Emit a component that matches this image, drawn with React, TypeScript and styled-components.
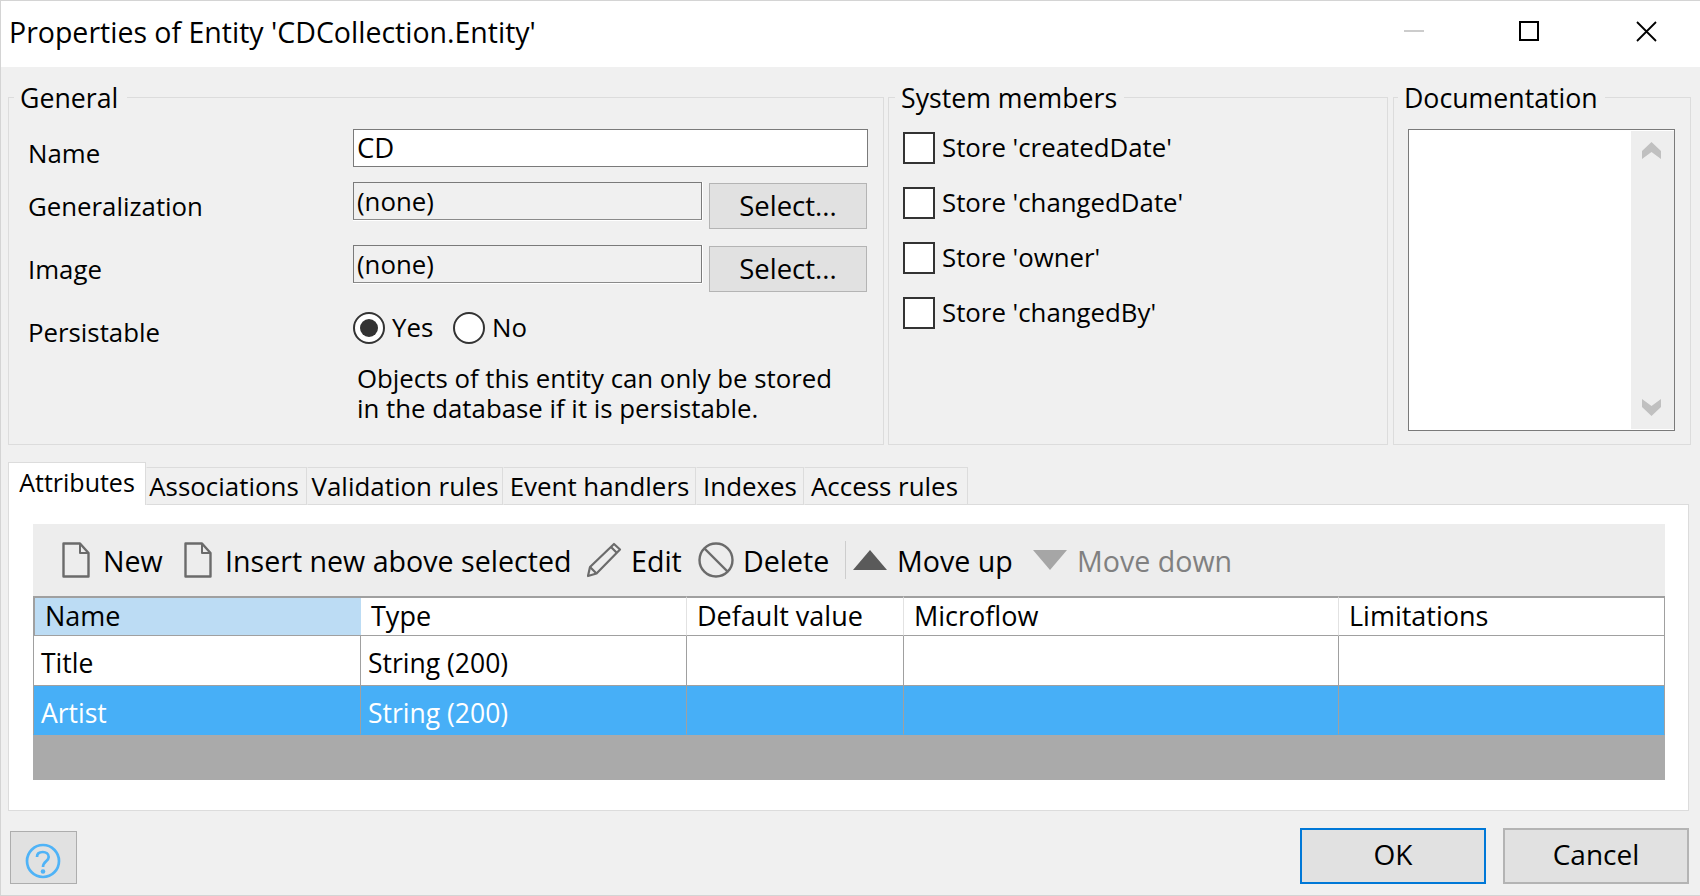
import React from 'react';
import styled, { createGlobalStyle } from 'styled-components';

const Global = createGlobalStyle`
  html, body { margin: 0; padding: 0; background: #f0f0f0; }
  body { font-family: "Open Sans", "Noto Sans", sans-serif; font-size: 25.8px; color: #000; }
  * { box-sizing: border-box; }
`;

const Dialog = styled.div`
  width: 1700px; height: 896px; background: #f0f0f0;
  border-top: 1px solid #d4d4d4; border-left: 1px solid #d4d4d4; border-bottom: 1px solid #d4d4d4;
  display: flex; flex-direction: column; overflow: hidden;
`;
const TitleBar = styled.div`
  height: 66px; flex: none; background: #fff; display: flex; align-items: center; padding-left: 8px;
`;
const TitleText = styled.div`font-size: 28.5px; flex: 1; line-height: 36px; margin-top: -5px; white-space: nowrap;`;
const WinButtons = styled.div`display: flex; align-items: center; padding-right: 43px; margin-top: -6px;`;
const WinIcon = styled.svg<{ $ml: number }>`display: block; margin-left: ${p => p.$ml}px;`;

const TopRow = styled.div`
  display: flex; margin: 13px 0 0 7px; height: 365px; flex: none;
`;
const Group = styled.fieldset<{ $w: number; $ml?: number }>`
  width: ${p => p.$w}px; margin: 0 0 0 ${p => p.$ml ?? 0}px; height: 365px; min-width: 0;
  border: 1px solid #dcdcdc; padding: 0;
`;
const Legend = styled.legend<{ $ml: number; $pr?: number }>`
  margin-left: ${p => p.$ml}px; padding: 0 ${p => p.$pr ?? 7}px 0 6px; line-height: 36px; height: 34px; font-size: 26.7px; white-space: nowrap;
`;
const GroupBody = styled.div<{ $pl: number }>`
  padding: 15px 0 0 ${p => p.$pl}px;
`;
const FormRow = styled.div<{ $h: number; $mb: number }>`
  display: flex; align-items: flex-start; height: ${p => p.$h}px; margin-bottom: ${p => p.$mb}px;
`;
const RowLabel = styled.div<{ $mt: number }>`
  width: 325px; flex: none; line-height: 36px; margin-top: ${p => p.$mt}px;
`;
const Field = styled.div<{ $w: number; $white?: boolean }>`
  width: ${p => p.$w}px; height: 38px; border: 1px solid #7a7a7a; border-bottom-color: ${p => p.$white ? '#7a7a7a' : '#8a8a8a'};
  background: ${p => p.$white ? '#fff' : 'transparent'}; box-shadow: ${p => p.$white ? 'none' : '0 1px 0 #fff, 1px 0 0 #fff'};
  padding-left: 3px; line-height: 36px; flex: none; font-size: ${p => p.$white ? 27.5 : 25.8}px;
`;
const SelectButton = styled.div`
  width: 158px; height: 46px; margin: 1px 0 0 7px; background: #e1e1e1; border: 1px solid #b4b4b4; font-size: 27.5px;
  display: flex; align-items: center; justify-content: center; flex: none; padding-bottom: 2px;
`;
const RadioGroup = styled.div`display: flex; align-items: center; height: 31px;`;
const Radio = styled.div<{ $on?: boolean }>`
  width: 32px; height: 32px; border-radius: 50%; border: 2px solid #333; background: #fff; flex: none;
  display: flex; align-items: center; justify-content: center;
  &::after { content: ''; width: 18px; height: 18px; border-radius: 50%; background: ${p => p.$on ? '#333' : 'transparent'}; }
`;
const RadioText = styled.span<{ $w: number }>`
  margin: -2px 0 0 7px; line-height: 36px; width: ${p => p.$w}px; flex: none;
`;
const Note = styled.div`
  margin: 20px 0 0 329px; line-height: 30px; white-space: nowrap;
`;
const CheckRow = styled.div`display: flex; align-items: center; height: 32px; margin: 3px 0 23px;`;
const CheckBox = styled.div`width: 32px; height: 32px; border: 2px solid #333; background: #fff; flex: none;`;
const CheckText = styled.span`margin: -2px 0 0 7px; line-height: 36px; white-space: nowrap;`;
const DocBox = styled.div`
  width: 267px; height: 302px; border: 1px solid #7a7a7a; background: #fff; display: flex; justify-content: flex-end; padding: 1px 0;
`;
const ScrollTrack = styled.div`
  width: 43px; background: #eeeeee; display: flex; flex-direction: column; justify-content: space-between; align-items: center; padding: 11px 2px 13px 0;
`;

const TabStrip = styled.div`
  display: flex; align-items: flex-end; margin: 17px 0 0 7px; position: relative; z-index: 1; height: 43px; flex: none;
`;
const Tab = styled.div<{ $w: number; $active?: boolean; $pr?: number }>`
  width: ${p => p.$w}px; height: ${p => p.$active ? 43 : 38}px; line-height: 36px; white-space: nowrap;
  background: ${p => p.$active ? '#fff' : '#f0f0f0'}; display: flex; justify-content: center;
  border: 1px solid #dcdcdc; border-left-color: ${p => p.$active ? '#dcdcdc' : 'transparent'};
  border-bottom: ${p => p.$active ? 'none' : '1px solid #dcdcdc'};
  padding: ${p => p.$active ? 1 : 0}px ${p => p.$pr ?? 0}px 0 0;
  font-size: ${p => p.$active ? 25 : 25.9}px;
`;
const Panel = styled.div`
  width: 1681px; height: 307px; margin: -1px 0 0 7px; background: #fff; border: 1px solid #dcdcdc; padding: 19px 23px 0 24px; flex: none;
`;
const Toolbar = styled.div`
  height: 72px; background: #ededed; display: flex; align-items: center; padding-left: 29px;
`;
const Tool = styled.div<{ $w: number; $gap: number; $off?: boolean }>`
  width: ${p => p.$w}px; display: flex; align-items: center; gap: ${p => p.$gap}px; white-space: nowrap; flex: none;
  color: ${p => p.$off ? '#808080' : '#000'}; font-size: 28.6px;
`;
const ToolSep = styled.div`width: 1px; height: 38px; background: #cdcdcd; margin-right: 7px; flex: none;`;
const ToolIcon = styled.svg`display: block; flex: none;`;

const GridWrap = styled.div`
  display: grid; grid-template-columns: 328px 326px 217px 435px 326px; grid-template-rows: 40px 50px 49px 45px; background: #aaa; width: 1632px;
`;
const HeadCell = styled.div<{ $sel?: boolean; $last?: boolean }>`
  background: ${p => p.$sel ? '#bcdcf4' : '#fff'}; border-top: 2px solid #a0a0a0; border-bottom: 1px solid #a0a0a0;
  border-left: ${p => p.$sel ? '2px solid #a0a0a0' : 'none'};
  border-right: ${p => p.$last ? '1px solid #a0a0a0' : p.$sel ? 'none' : '1px solid #e2e2e2'};
  padding-left: 10px; font-size: 27px; line-height: 35px; white-space: nowrap;
`;
const BodyCell = styled.div<{ $row: 'plain' | 'sel'; $first?: boolean }>`
  background: ${p => p.$row === 'sel' ? '#47aff7' : '#fff'};
  color: ${p => p.$row === 'sel' ? '#fff' : '#000'};
  border-bottom: 1px solid ${p => p.$row === 'sel' ? '#47aff7' : '#a0a0a0'};
  border-right: 1px solid #a0a0a0;
  border-left: ${p => p.$first ? '1px solid #a0a0a0' : 'none'};
  padding-left: 7px; font-size: 26.5px; line-height: 54px; white-space: nowrap; height: 100%; overflow: visible;
`;
const Filler = styled.div`grid-column: 1 / -1; background: #aaa;`;

const Footer = styled.div`
  display: flex; align-items: flex-start; margin-top: 17px; padding: 0 11px 0 9px; flex: none;
`;
const HelpButton = styled.div`
  width: 67px; height: 53px; margin-top: 3px; background: #e1e1e1; border: 1px solid #adadad;
  display: flex; align-items: center; justify-content: center; padding: 6px 2px 0 0;
`;
const Spacer = styled.div`flex: 1;`;
const DlgButton = styled.div<{ $primary?: boolean }>`
  width: 186px; height: 56px; background: #e1e1e1; margin-left: ${p => p.$primary ? 0 : 17}px;
  border: 2px solid ${p => p.$primary ? '#0078d7' : '#b4b4b4'}; font-size: 28px;
  display: flex; align-items: center; justify-content: center; padding-bottom: 4px;
`;

const DocIcon = () => (
  <ToolIcon width="28" height="36" viewBox="0 0 28 36" fill="none" stroke="#6b6b6b" strokeWidth="2.4" strokeLinejoin="round">
    <path d="M1.5 1.5H18L26.5 11V34.5H1.5Z" />
    <path d="M18 1.5V11H26.5" strokeWidth="2" />
  </ToolIcon>
);

const columns = ['Name', 'Type', 'Default value', 'Microflow', 'Limitations'];
const rows: { name: string; kind: 'plain' | 'sel' }[] = [
  { name: 'Title', kind: 'plain' },
  { name: 'Artist', kind: 'sel' },
];

export default function App() {
  return (
    <Dialog>
      <Global />
      <TitleBar>
        <TitleText>Properties of Entity 'CDCollection.Entity'</TitleText>
        <WinButtons>
          <WinIcon $ml={0} width="20" height="4" viewBox="0 0 20 4"><rect y="1" width="20" height="2" fill="#cccccc" /></WinIcon>
          <WinIcon $ml={95} width="20" height="20" viewBox="0 0 20 20"><rect x="1" y="1" width="18" height="18" fill="none" stroke="#000" strokeWidth="2" /></WinIcon>
          <WinIcon $ml={97} width="21" height="21" viewBox="0 0 21 21"><path d="M1 1L20 20M20 1L1 20" stroke="#000" strokeWidth="1.8" /></WinIcon>
        </WinButtons>
      </TitleBar>

      <TopRow>
        <Group $w={876}>
          <Legend $ml={5} $pr={9}>General</Legend>
          <GroupBody $pl={19}>
            <FormRow $h={38} $mb={15}>
              <RowLabel $mt={6}>Name</RowLabel>
              <Field $w={515} $white>CD</Field>
            </FormRow>
            <FormRow $h={47} $mb={16}>
              <RowLabel $mt={6}>Generalization</RowLabel>
              <Field $w={349}>(none)</Field>
              <SelectButton>Select...</SelectButton>
            </FormRow>
            <FormRow $h={47} $mb={20}>
              <RowLabel $mt={6}>Image</RowLabel>
              <Field $w={349}>(none)</Field>
              <SelectButton>Select...</SelectButton>
            </FormRow>
            <FormRow $h={31} $mb={0}>
              <RowLabel $mt={2}>Persistable</RowLabel>
              <RadioGroup>
                <Radio $on />
                <RadioText $w={61}>Yes</RadioText>
                <Radio />
                <RadioText $w={40}>No</RadioText>
              </RadioGroup>
            </FormRow>
            <Note>Objects of this entity can only be stored<br />in the database if it is persistable.</Note>
          </GroupBody>
        </Group>

        <Group $w={500} $ml={4}>
          <Legend $ml={6}>System members</Legend>
          <GroupBody $pl={14}>
            {['createdDate', 'changedDate', 'owner', 'changedBy'].map(n => (
              <CheckRow key={n}>
                <CheckBox />
                <CheckText>Store '{n}'</CheckText>
              </CheckRow>
            ))}
          </GroupBody>
        </Group>

        <Group $w={298} $ml={5}>
          <Legend $ml={4}>Documentation</Legend>
          <GroupBody $pl={14}>
            <DocBox>
              <ScrollTrack>
                <svg width="19" height="17" viewBox="0 0 19 17"><path d="M0 9L9.5 0L19 9V17L9.5 10L0 17Z" fill="#c0c0c0" /></svg>
                <svg width="19" height="17" viewBox="0 0 19 17"><path d="M0 0L9.5 7L19 0V8L9.5 17L0 8Z" fill="#c0c0c0" /></svg>
              </ScrollTrack>
            </DocBox>
          </GroupBody>
        </Group>
      </TopRow>

      <TabStrip>
        <Tab $w={138} $active>Attributes</Tab>
        <Tab $w={161} $pr={5}>Associations</Tab>
        <Tab $w={196}>Validation rules</Tab>
        <Tab $w={193}>Event handlers</Tab>
        <Tab $w={108}>Indexes</Tab>
        <Tab $w={164} $pr={3}>Access rules</Tab>
      </TabStrip>

      <Panel>
        <Toolbar>
          <Tool $w={122} $gap={13}><DocIcon />New</Tool>
          <Tool $w={402} $gap={13}><DocIcon />Insert new above selected</Tool>
          <Tool $w={112} $gap={9}>
            <ToolIcon width="36" height="36" viewBox="0 0 36 36" fill="none" stroke="#6b6b6b" strokeWidth="2.2" strokeLinejoin="round">
              <path d="M2 34L4 25L28 2L34 7.5L10.5 31.5Z" />
              <path d="M4 25L10.5 31.5M25 5L31 11" />
            </ToolIcon>
            Edit
          </Tool>
          <Tool $w={147} $gap={9}>
            <ToolIcon width="36" height="36" viewBox="0 0 36 36" fill="none" stroke="#6b6b6b" strokeWidth="2.4">
              <circle cx="18" cy="18" r="16.5" />
              <path d="M6.5 6.5L29.5 29.5" />
            </ToolIcon>
            Delete
          </Tool>
          <ToolSep />
          <Tool $w={180} $gap={10}>
            <ToolIcon width="34" height="20" viewBox="0 0 34 20"><path d="M17 0L34 20H0Z" fill="#5a5a5a" /></ToolIcon>
            Move up
          </Tool>
          <Tool $w={250} $gap={10} $off>
            <ToolIcon width="34" height="20" viewBox="0 0 34 20"><path d="M0 0H34L17 20Z" fill="#a6a6a6" /></ToolIcon>
            Move down
          </Tool>
        </Toolbar>
        <GridWrap>
          {columns.map((c, i) => <HeadCell key={c} $sel={i === 0} $last={i === 4}>{c}</HeadCell>)}
          {rows.map(({ name, kind }) => (
            <React.Fragment key={name}>
              <BodyCell $row={kind} $first>{name}</BodyCell>
              <BodyCell $row={kind}>String (200)</BodyCell>
              <BodyCell $row={kind} />
              <BodyCell $row={kind} />
              <BodyCell $row={kind} />
            </React.Fragment>
          ))}
          <Filler />
        </GridWrap>
      </Panel>

      <Footer>
        <HelpButton>
          <svg width="36" height="36" viewBox="0 0 36 36" fill="none" stroke="#4fb3f7" strokeWidth="2.7">
            <circle cx="18" cy="18" r="16" />
            <path d="M12 14C12 10.5 14.5 9 17.8 9C21 9 23.7 11 23.7 14C23.7 18.3 18 18.5 18 24" />
            <circle cx="18" cy="28.5" r="2.3" fill="#4fb3f7" stroke="none" />
          </svg>
        </HelpButton>
        <Spacer />
        <DlgButton $primary>OK</DlgButton>
        <DlgButton>Cancel</DlgButton>
      </Footer>
    </Dialog>
  );
}
